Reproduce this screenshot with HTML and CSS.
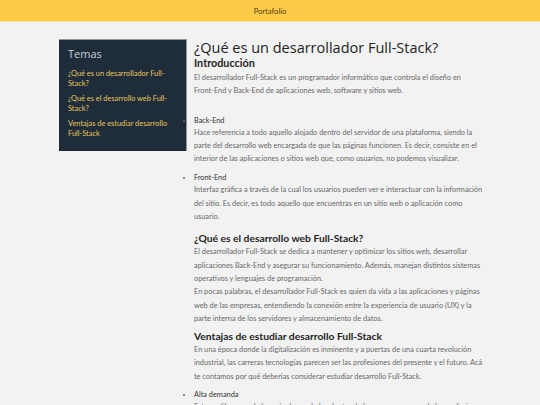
FILE: index.html
```html
<!DOCTYPE html>
<html lang="es">
<head>
<meta charset="utf-8">
<title>Portafolio</title>
<link rel="stylesheet" href="styles.css">
</head>
<body>
<header class="topbar">Portafolio</header>
<div class="container">
  <aside class="sidebar">
    <h3 class="sidebar-title">Temas</h3>
    <ul class="topics">
      <li><a href="#q1">¿Qué es un desarrollador Full-Stack?</a></li>
      <li><a href="#q2">¿Qué es el desarrollo web Full-Stack?</a></li>
      <li><a href="#q3">Ventajas de estudiar desarrollo Full-Stack</a></li>
    </ul>
  </aside>
  <main class="content">
    <h1 class="title" id="q1">¿Qué es un desarrollador Full-Stack?</h1>
    <h2 class="sub">Introducción</h2>
    <p class="intro">El desarrollador Full-Stack es un programador informático que controla el diseño en <span class="nowrap">Front-End</span> y Back-End de aplicaciones web, software y sitios web.</p>
    <ul class="points">
      <li><span class="label">Back-End</span>
        <p>Hace referencia a todo aquello alojado dentro del servidor de una plataforma, siendo la parte del desarrollo web encargada de que las páginas funcionen. Es decir, consiste en el interior de las aplicaciones o sitios web que, como usuarios, no podemos visualizar.</p>
      </li>
      <li><span class="label">Front-End</span>
        <p>Interfaz gráfica a través de la cual los usuarios pueden ver e interactuar con la información del sitio. Es decir, es todo aquello que encuentras en un sitio web o aplicación como usuario.</p>
      </li>
    </ul>
    <h2 class="section" id="q2">¿Qué es el desarrollo web Full-Stack?</h2>
    <p>El desarrollador Full-Stack se dedica a mantener y optimizar los sitios web, desarrollar aplicaciones Back-End y asegurar su funcionamiento. Además, manejan distintos sistemas operativos y lenguajes de programación.<br>En pocas palabras, el desarrollador Full-Stack es quien da vida a las aplicaciones y páginas web de las empresas, entendiendo la conexión entre la experiencia de usuario (UX) y la parte interna de los servidores y almacenamiento de datos.</p>
    <h2 class="section" id="q3">Ventajas de estudiar desarrollo Full-Stack</h2>
    <p>En una época donde la digitalización es inminente y a puertas de una cuarta revolución industrial, las carreras tecnologías parecen ser las profesiones del presente y el futuro. Acá te contamos por qué deberías considerar estudiar desarrollo Full-Stack.</p>
    <ul class="points later">
      <li><span class="label">Alta demanda</span>
        <p>Este perfil es uno de los más demandados dentro de las empresas y uno de las profesiones mejor pagadas del mercado tecnológico actual.</p>
      </li>
    </ul>
  </main>
</div>
</body>
</html>
```
FILE: styles.css
```css
* { box-sizing: border-box; }
html, body { margin: 0; padding: 0; }
body {
  background: #f2f2f2;
  font-family: Lato, "Liberation Sans", sans-serif;
  color: #686868;
  font-size: 7.35px;
}
.topbar {
  height: 22px;
  background: #ffcb47;
  border-bottom: 1px solid #f8df9a;
  text-align: center;
  line-height: 22px;
  font-size: 7.6px;
  color: #4a3d1a;
}
.container {
  width: 430px;
  margin: 17px 0 0 calc(50% - 211px);
  display: flex;
  align-items: flex-start;
  gap: 7px;
}
.sidebar {
  flex: 0 0 128px;
  background: #1f2d3b;
  border-top: 1px solid #8d969e;
  border-right: 1px solid #8d969e;
  padding: 6px 9px 12px;
}
.sidebar-title {
  margin: 0 0 8px;
  font-family: "Open Sans", sans-serif;
  font-weight: 400;
  font-size: 11px;
  color: #c9cdd1;
}
.topics { list-style: none; margin: 0; padding: 0; }
.topics li { margin-bottom: 5px; line-height: 10px; }
.topics li:last-child { margin-bottom: 0; }
.topics a { color: #e8c45c; text-decoration: none; font-size: 7.4px; }
.content { flex: 1; min-width: 0; }
.content p { margin: 0; line-height: 13.3px; }
.content p.intro { margin-top: 2px; }
.nowrap { white-space: nowrap; }
.title {
  margin: 0;
  font-family: "Open Sans", sans-serif;
  font-weight: 400;
  font-size: 14.5px;
  line-height: 17px;
  color: #222;
}
.sub {
  margin: 0;
  font-size: 10.8px;
  font-weight: 700;
  line-height: 13px;
  color: #222;
}
.section {
  margin: 4px 0 0;
  font-size: 10.3px;
  font-weight: 700;
  line-height: 14px;
  color: #222;
}
.points { margin: 18px 0 0; padding: 0; }
.points.later { margin-top: 7px; }
.points li { margin-bottom: 8px; }
.label { color: #333; line-height: 10px; display: block; }
```
